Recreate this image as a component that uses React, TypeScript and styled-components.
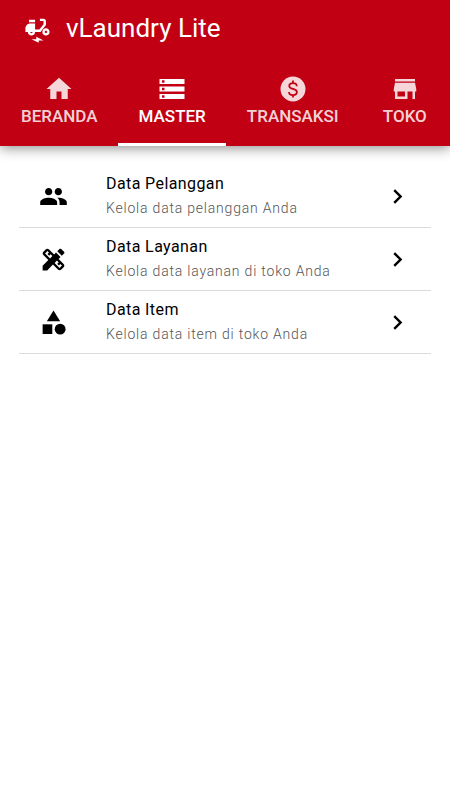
import React, { useState } from "react";
import styled, { createGlobalStyle } from "styled-components";
import {
  MdCategory,
  MdChevronRight,
  MdDesignServices,
  MdHome,
  MdPeople,
  MdStorage,
  MdStore,
} from "react-icons/md";

const brandRed = "#c20014";

const GlobalStyle = createGlobalStyle`
  *, *::before, *::after { box-sizing: border-box; }
  body {
    margin: 0;
    background: #fff;
    color: #000;
    font-family: Roboto, "Liberation Sans", sans-serif;
  }
`;

const Header = styled.header`
  background: ${brandRed};
  color: #fff;
  box-shadow: 0 2px 12px rgba(0, 0, 0, 0.45);
`;

const Toolbar = styled.div`
  display: flex;
  align-items: center;
  gap: 14px;
  height: 56px;
  padding: 0 23px;

  svg {
    margin-top: 3px;
  }
`;

const Title = styled.h1`
  margin: 0;
  font-size: 26px;
  line-height: 32px;
  font-weight: 400;
`;

const Tabs = styled.nav`
  display: flex;
`;

const Tab = styled.button<{ $active: boolean }>`
  display: flex;
  flex: none;
  flex-direction: column;
  align-items: center;
  height: 90px;
  padding: 18px 20px 0 21px;
  border: 0;
  border-bottom: 3px solid ${({ $active }) => ($active ? "#fff" : "transparent")};
  background: none;
  color: ${({ $active }) => ($active ? "#fff" : "rgba(255, 255, 255, 0.84)")};
  font-family: inherit;
  font-size: 17px;
  line-height: 24px;
  font-weight: 500;
  cursor: pointer;

  &:last-child {
    flex: 1 0 auto;
  }
`;

const List = styled.ul`
  list-style: none;
  margin: 0;
  padding: 19px;
`;

const Item = styled.li`
  border-bottom: 1px solid #d9dbdc;
`;

const ItemButton = styled.button`
  display: flex;
  align-items: center;
  width: 100%;
  height: 62px;
  padding: 0 19px 0 20px;
  border: 0;
  background: none;
  color: inherit;
  font-family: inherit;
  text-align: left;
  cursor: pointer;
`;

const ItemText = styled.span`
  display: flex;
  flex: 1;
  flex-direction: column;
  margin-left: 38px;
`;

const ItemTitle = styled.span`
  font-size: 16px;
  line-height: 25px;
  letter-spacing: 0.4px;
`;

const ItemNote = styled.span`
  color: #555;
  font-size: 14px;
  line-height: 25px;
  font-weight: 300;
  letter-spacing: 0.8px;
`;

type Icon = React.ComponentType<{ size?: number; "aria-hidden"?: boolean }>;

function Moped({ size = 24 }: { size?: number }) {
  return (
    <svg width={size} height={size} viewBox="0 0 24 24" fill="currentColor" aria-hidden>
      <path d="M19 5c0-1.1-.9-2-2-2h-3v2h3v2.65L13.52 12H10V7H6c-2.21 0-4 1.79-4 4v3h2c0 1.66 1.34 3 3 3s3-1.34 3-3h4.48L19 8.35V5zM7 15c-.55 0-1-.45-1-1h2c0 .55-.45 1-1 1z" />
      <path d="M5 4h5v2H5zM19 11c-1.66 0-3 1.34-3 3s1.34 3 3 3 3-1.34 3-3-1.34-3-3-3zm0 4c-.55 0-1-.45-1-1s.45-1 1-1 1 .45 1 1-.45 1-1 1zM7 20h4v-2l6 3h-4v2z" />
    </svg>
  );
}

function DollarCircle({ size = 24 }: { size?: number }) {
  return (
    <svg width={size} height={size} viewBox="0 0 24 24" aria-hidden>
      <circle cx="12" cy="12" r="10" fill="currentColor" />
      <path
        d="M15 9.7C15 8 13.8 7.2 12 7.2S9 8.1 9 9.5C9 12.7 15.1 11.1 15.1 14.4C15.1 16 13.8 16.8 12 16.8S8.8 15.9 8.8 14.3M12 5.2v2M12 16.8v2"
        fill="none"
        stroke={brandRed}
        strokeWidth="1.4"
      />
    </svg>
  );
}

const tabs: { label: string; icon: Icon }[] = [
  { label: "BERANDA", icon: MdHome },
  { label: "MASTER", icon: MdStorage },
  { label: "TRANSAKSI", icon: DollarCircle },
  { label: "TOKO", icon: MdStore },
];

const items: { title: string; note: string; icon: Icon }[] = [
  { title: "Data Pelanggan", note: "Kelola data pelanggan Anda", icon: MdPeople },
  { title: "Data Layanan", note: "Kelola data layanan di toko Anda", icon: MdDesignServices },
  { title: "Data Item", note: "Kelola data item di toko Anda", icon: MdCategory },
];

export default function App() {
  const [active, setActive] = useState("MASTER");

  return (
    <>
      <GlobalStyle />
      <Header>
        <Toolbar>
          <Moped size={29} />
          <Title>vLaundry Lite</Title>
        </Toolbar>
        <Tabs>
          {tabs.map(({ label, icon: TabIcon }) => (
            <Tab
              key={label}
              type="button"
              $active={label === active}
              aria-current={label === active ? "page" : undefined}
              onClick={() => setActive(label)}
            >
              <TabIcon size={30} aria-hidden />
              {label}
            </Tab>
          ))}
        </Tabs>
      </Header>
      <main>
        <List>
          {items.map(({ title, note, icon: ItemIcon }) => (
            <Item key={title}>
              <ItemButton type="button">
                <ItemIcon size={29} aria-hidden />
                <ItemText>
                  <ItemTitle>{title}</ItemTitle>
                  <ItemNote>{note}</ItemNote>
                </ItemText>
                <MdChevronRight size={29} aria-hidden />
              </ItemButton>
            </Item>
          ))}
        </List>
      </main>
    </>
  );
}
